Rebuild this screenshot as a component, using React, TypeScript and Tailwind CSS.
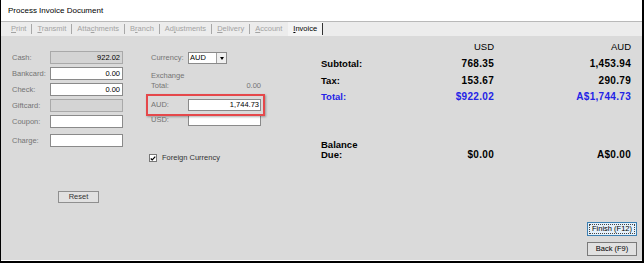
const font = "font-['Liberation_Sans',Arial,sans-serif]";

const tabs = [
  { pre: "", key: "P", post: "rint" },
  { pre: "", key: "T", post: "ransmit" },
  { pre: "Atta", key: "c", post: "hments" },
  { pre: "B", key: "r", post: "anch" },
  { pre: "Ad", key: "j", post: "ustments" },
  { pre: "", key: "D", post: "elivery" },
  { pre: "", key: "A", post: "ccount" },
];

const Field = ({ label, value, disabled, className = "" }: { label: string; value?: string; disabled?: boolean; className?: string }) => (
  <div className={`flex h-[13px] items-center ${className}`}>
    <span className="w-[38px] text-[7.5px] leading-none text-[#747474]">{label}</span>
    <div
      className={`flex h-[13px] w-[73px] items-center justify-end border pr-[2px] text-[7.5px] leading-none text-black ${
        disabled ? "border-[#a9a9a9] bg-[#d4d4d4]" : "border-[#8a8a8a] bg-white"
      }`}
    >
      {value}
    </div>
  </div>
);

const SumRow = ({ label, usd, aud, blue, h }: { label: string; usd: string; aud: string; blue?: boolean; h: string }) => (
  <div className={`grid grid-cols-[100px_73px_137px] items-center ${h} ${blue ? "text-[#2323e6]" : "text-black"}`}>
    <span className="text-[9.5px] font-bold leading-none">{label}</span>
    <span className="text-right text-[10px] font-bold leading-none tracking-[0.03em]">{usd}</span>
    <span className="text-right text-[10px] font-bold leading-none tracking-[0.03em]">{aud}</span>
  </div>
);

export default function App() {
  return (
    <div className={`h-[265px] w-[644px] bg-white ${font}`}>
      <div className="flex h-[263px] w-[644px] flex-col border-b-2 border-l border-r-2 border-black">
        {/* title bar */}
        <div className="flex h-[22px] items-center border-b border-[#b9b9b9] bg-white pl-[7px] text-[8px] text-black">
          Process Invoice Document
        </div>

        {/* tab strip */}
        <div className="flex h-[14px] items-center bg-[#ececec] pl-[10px] text-[7.5px] leading-none text-[#a3a3a3]">
          {tabs.map((t, i) => (
            <div key={i} className="flex items-center">
              <span>
                {t.pre}
                <span className="underline">{t.key}</span>
                {t.post}
              </span>
              {i < tabs.length - 1 && <span className="mx-[5px] h-[10px] w-px bg-[#a8a8a8]" />}
            </div>
          ))}
          <div className="ml-[6px] flex h-full items-center bg-[#f4f4f4] pl-[5px] text-black">
            <span>
              <span className="underline">I</span>nvoice
            </span>
            <span className="ml-[5px] h-[12px] w-px bg-[#333]" />
          </div>
        </div>

        {/* body */}
        <div className="flex h-[224px] bg-[#dadada] pl-[11px]">
          {/* left column */}
          <div className="flex w-[111px] flex-col pt-[15px]">
            <Field label="Cash:" value="922.02" disabled className="mb-[3px]" />
            <Field label="Bankcard:" value="0.00" className="mb-[3px]" />
            <Field label="Check:" value="0.00" className="mb-[3px]" />
            <Field label="Giftcard:" disabled className="mb-[3px]" />
            <Field label="Coupon:" />
            <Field label="Charge:" className="mt-[6px]" />
            <button className="ml-[46px] mt-[44px] flex h-[12px] w-[41px] items-center justify-center border border-[#8f8f8f] bg-[#e1e1e1] text-[7.5px] leading-none text-[#333]">
              Reset
            </button>
          </div>

          {/* middle column */}
          <div className="ml-[23px] flex w-[119px] flex-col pt-[16px]">
            <div className="flex h-[12px] items-center pl-[5px]">
              <span className="w-[37px] text-[7.5px] leading-none text-[#747474]">Currency:</span>
              <div className="flex h-[12px] w-[39px] items-center border border-[#8a8a8a] bg-white">
                <span className="flex-1 pl-[1px] text-[7.5px] leading-none text-black">AUD</span>
                <span className="flex h-full w-[10px] items-center justify-center border-l border-[#a0a0a0] bg-[#f0f0f0]">
                  <span className="h-0 w-0 border-x-[2.5px] border-t-[3px] border-x-transparent border-t-black" />
                </span>
              </div>
            </div>
            <div className="mt-[7px] flex items-end pl-[5px] pr-[4px] text-[7.5px] leading-[10px] text-[#747474]">
              <div className="flex-1">
                <div>Exchange</div>
                <div>Total:</div>
              </div>
              <span>0.00</span>
            </div>
            <div className="relative mt-[8px] flex h-[12px] items-center pl-[5px]">
              <span className="w-[37px] text-[7.5px] leading-none text-[#747474]">AUD:</span>
              <div className="flex h-[12px] w-[73px] items-center justify-end border border-[#8a8a8a] bg-white pr-[1px] text-[7.5px] leading-none text-black">
                1,744.73
              </div>
              <div className="pointer-events-none absolute -bottom-[5px] -top-[5px] left-0 right-0 border-2 border-[#e5484b] shadow-[1px_1px_2px_rgba(0,0,0,0.3)]" />
            </div>
            <div className="mt-[3px] flex h-[12px] items-center pl-[5px]">
              <span className="w-[37px] text-[7.5px] leading-none text-[#747474]">USD:</span>
              <div className="h-[12px] w-[73px] border border-[#8a8a8a] bg-white" />
            </div>
            <div className="mt-[28px] flex items-center pl-[3px]">
              <span className="flex h-[8px] w-[8px] items-center justify-center border border-[#777] bg-white">
                <svg viewBox="0 0 8 8" className="h-[7px] w-[7px]">
                  <path d="M1 4 L3 6 L7 1.5" fill="none" stroke="#000" strokeWidth="1.6" />
                </svg>
              </span>
              <span className="ml-[5px] text-[7.5px] leading-none text-[#333]">Foreign Currency</span>
            </div>
          </div>

          {/* right column */}
          <div className="ml-[56px] flex w-[316px] flex-col pt-[3px]">
            <div className="grid h-[16px] grid-cols-[100px_73px_137px] items-center text-[9.5px] leading-none text-black">
              <span />
              <span className="text-right">USD</span>
              <span className="text-right">AUD</span>
            </div>
            <SumRow label="Subtotal:" usd="768.35" aud="1,453.94" h="h-[17px]" />
            <SumRow label="Tax:" usd="153.67" aud="290.79" h="h-[17px]" />
            <SumRow label="Total:" usd="$922.02" aud="A$1,744.73" blue h="h-[15px]" />
            <div className="mt-[36px] grid grid-cols-[100px_73px_137px] items-end text-black">
              <div className="text-[9.5px] font-bold leading-[10px]">
                <div>Balance</div>
                <div>Due:</div>
              </div>
              <span className="text-right text-[10px] font-bold leading-[10px] tracking-[0.03em]">$0.00</span>
              <span className="text-right text-[10px] font-bold leading-[10px] tracking-[0.03em]">A$0.00</span>
            </div>
            <button className="mt-[62px] flex h-[14px] w-[50px] items-center justify-center self-end border border-[#3c7fb1] bg-[#e5f1fb] p-px text-[7.5px] leading-none text-black">
              <span className="flex h-full w-full items-center justify-center border border-dotted border-[#444]">
                Finish (F12)
              </span>
            </button>
            <button className="mt-[6px] flex h-[14px] w-[50px] items-center justify-center self-end border border-[#7a7a7a] bg-[#e1e1e1] text-[7.5px] leading-none text-black">
              Back (F9)
            </button>
          </div>
        </div>
      </div>
    </div>
  );
}
